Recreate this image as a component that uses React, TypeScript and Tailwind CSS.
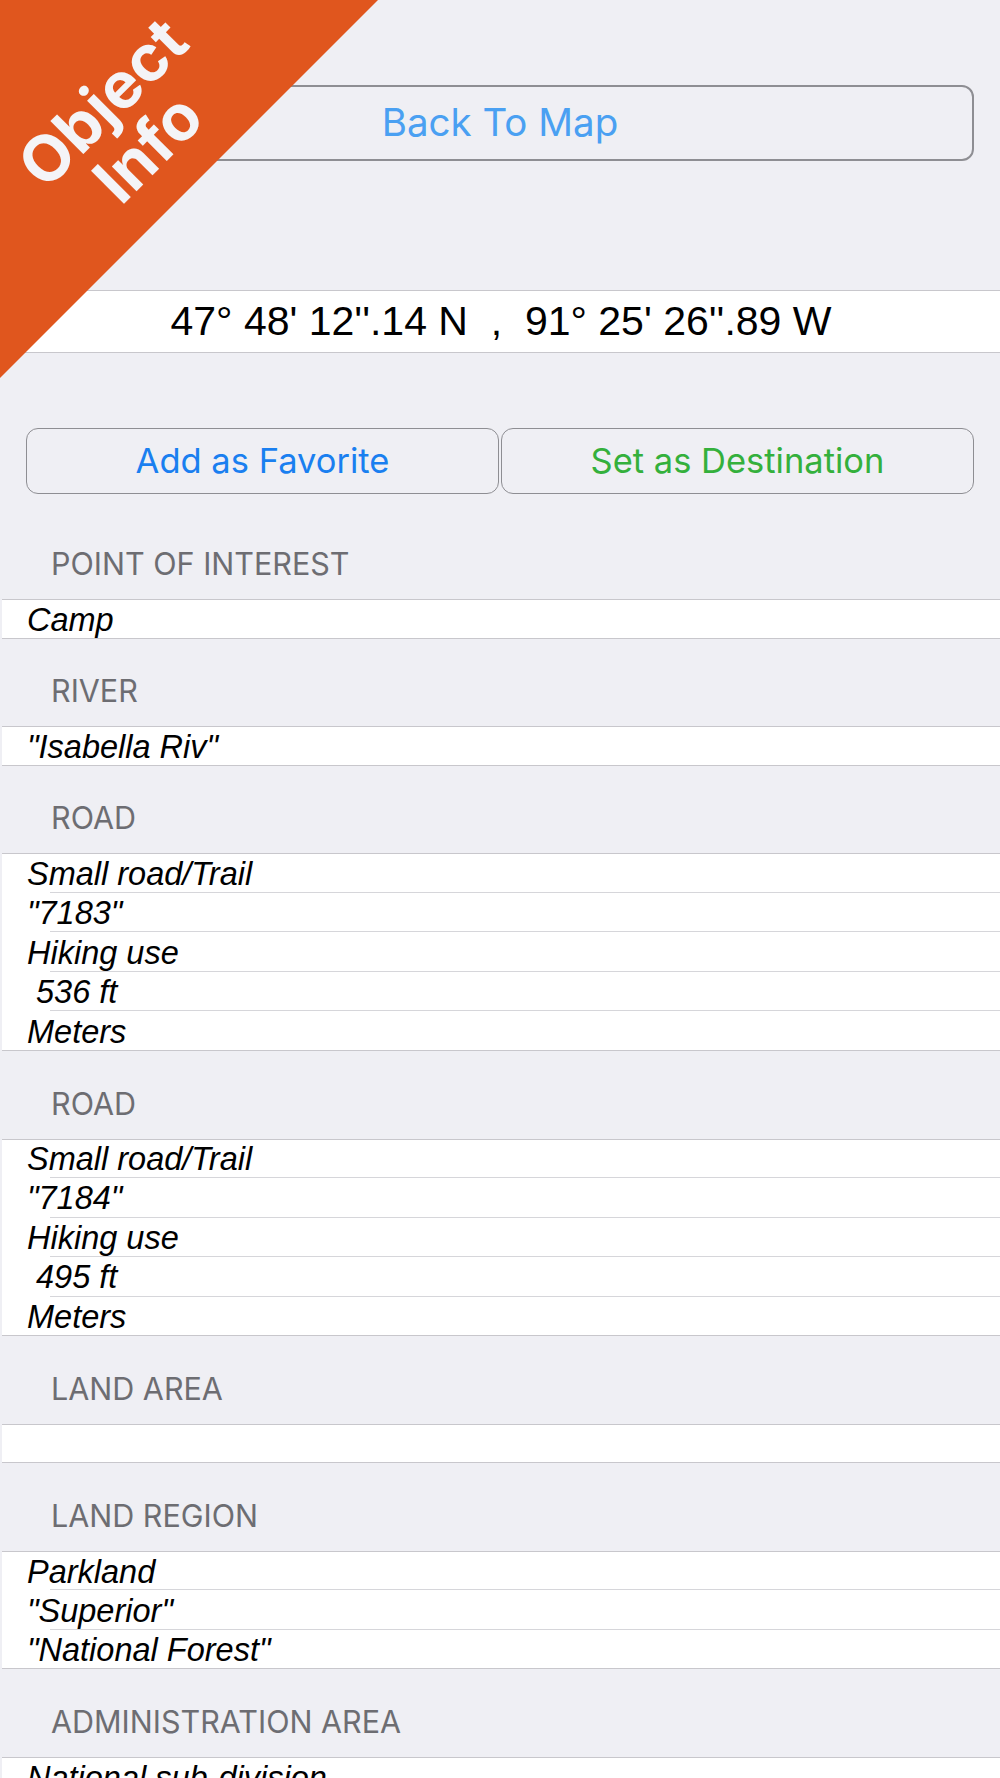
import React from 'react';

const SF = { fontFamily: 'Inter, "Noto Sans", sans-serif' };
const HELV = { fontFamily: '"Liberation Sans", Arial, sans-serif' };

interface Section {
  title: string;
  rows: string[];
  first?: boolean;
}

const sections: Section[] = [
  { title: 'POINT OF INTEREST', rows: ['Camp'], first: true },
  { title: 'RIVER', rows: ['"Isabella Riv"'] },
  { title: 'ROAD', rows: ['Small road/Trail', '"7183"', 'Hiking use', '\u00a0536 ft', 'Meters'] },
  { title: 'ROAD', rows: ['Small road/Trail', '"7184"', 'Hiking use', '\u00a0495 ft', 'Meters'] },
  { title: 'LAND AREA', rows: [''] },
  { title: 'LAND REGION', rows: ['Parkland', '"Superior"', '"National Forest"'] },
  { title: 'ADMINISTRATION AREA', rows: ['National sub-division'] },
];

// orange "Object Info" ribbon in the top-left corner
const Corner = () => (
  <div className="absolute left-0 top-0 w-[378px] h-[378px] pointer-events-none">
    <div className="absolute inset-0 bg-[#e0561e] [clip-path:polygon(0_0,100%_0,0_100%)]" />
    <div
      className="absolute left-[125px] top-[125px] -translate-x-1/2 -translate-y-1/2 -rotate-45 text-center text-[#f4f4f7] font-bold text-[64px] leading-[64px] whitespace-nowrap"
      style={SF}
    >
      <div>Object</div>
      <div>Info</div>
    </div>
  </div>
);

const SectionBlock = ({ section }: { section: Section }) => (
  <div>
    <div
      className={`${section.first ? 'h-[105px]' : 'h-[87.7px]'} flex items-end pl-[51px] pb-[17px] text-[30.5px] leading-[36px] text-[#6d6d72]`}
      style={SF}
    >
      {section.title}
    </div>
    <div className="ml-[2px] bg-white border-y border-[#c8c7cc]">
      {section.rows.map((row, i) => (
        <div key={i}>
          {i > 0 && <div className="ml-[48px] h-px bg-[#d6d6da]" />}
          <div
            className={`${i > 0 ? 'h-[38.5px]' : 'h-[37.5px]'} flex items-center pt-[3px] pl-[25px] italic text-[32.5px] text-black whitespace-pre`}
            style={HELV}
          >
            {row}
          </div>
        </div>
      ))}
    </div>
  </div>
);

export default function App() {
  return (
    <div className="relative w-[1000px] h-[1778px] overflow-hidden bg-[#efeff4]">
      <div className="pt-[85px] px-[26px]">
        <div
          className="h-[76px] rounded-[12px] border-2 border-[#8e8e93] flex items-center justify-center text-[38.5px] text-[#4aa0f2]"
          style={SF}
        >
          Back To Map
        </div>
      </div>

      <div
        className="mt-[129px] ml-[2px] h-[63px] bg-white border-y border-[#c8c7cc] flex items-center justify-center text-[41px] text-black whitespace-pre"
        style={HELV}
      >
        {"47° 48' 12''.14 N  ,  91° 25' 26''.89 W"}
      </div>

      <div className="mt-[75px] px-[26px] flex gap-[2px] h-[66px]" style={SF}>
        <div className="flex-1 rounded-[12px] border border-[#8e8e93] flex items-center justify-center text-[34.5px] text-[#1a7ff0]">
          Add as Favorite
        </div>
        <div className="flex-1 rounded-[12px] border border-[#8e8e93] flex items-center justify-center text-[34.5px] text-[#34b03c]">
          Set as Destination
        </div>
      </div>

      {sections.map((s, i) => (
        <SectionBlock key={i} section={s} />
      ))}

      <Corner />
    </div>
  );
}
